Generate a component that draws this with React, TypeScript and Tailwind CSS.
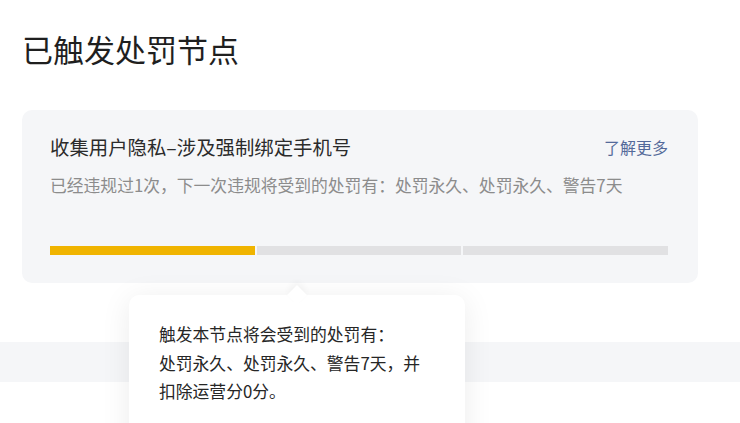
import React from "react";

const font = { fontFamily: '"Noto Sans CJK SC", "Noto Sans", sans-serif' };

export default function App() {
  return (
    <div className="relative w-[740px] h-[423px] overflow-hidden bg-white" style={font}>
      <div className="px-[22px] pt-[29px]">
        <h1 className="text-[31px] leading-[40px] text-[#1f1f1f] font-normal">已触发处罚节点</h1>
        <div className="mt-[41px] w-[676px] h-[173px] rounded-[10px] bg-[#f5f6f8] pl-[28px] pr-[30px] pt-[24px]">
          <div className="flex items-center justify-between">
            <div className="text-[19.4px] leading-[26px] text-[#2b2b2b]">收集用户隐私–涉及强制绑定手机号</div>
            <div className="text-[16px] leading-[26px] text-[#546a9a]">了解更多</div>
          </div>
          <div className="mt-[13px] text-[16.8px] leading-[24px] text-[#8c8c8c]">
            已经违规过1次，下一次违规将受到的处罚有：处罚永久、处罚永久、警告7天
          </div>
          <div className="mt-[49px] flex gap-[2px] h-[9px]">
            <div className="flex-1 bg-[#f0b400]" />
            <div className="flex-1 bg-[#e1e1e3]" />
            <div className="flex-1 bg-[#e1e1e3]" />
          </div>
        </div>
      </div>
      <div className="mt-[59px] h-[40px] bg-[#f5f6f8]" />
      <div className="absolute left-[129px] top-[295px] w-[336px] h-[160px] rounded-[10px] bg-white shadow-[0_4px_30px_rgba(0,0,0,0.08)] px-[30px] pt-[25px]">
        <div className="absolute left-[161px] -top-[7px] w-[14px] h-[14px] rotate-45 bg-white shadow-[-3px_-3px_6px_rgba(0,0,0,0.04)]" />
        <div className="relative text-[16.8px] leading-[28.5px] text-[#262626]">
          触发本节点将会受到的处罚有：
          <br />
          处罚永久、处罚永久、警告7天，并
          <br />
          扣除运营分0分。
        </div>
      </div>
    </div>
  );
}
